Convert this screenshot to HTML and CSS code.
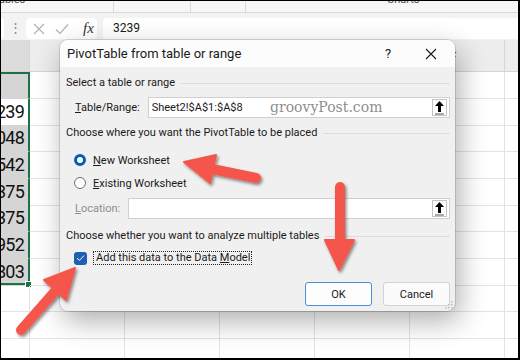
FILE: index.html
```html
<!DOCTYPE html>
<html lang="en">
<head>
<meta charset="UTF-8">
<meta name="viewport" content="width=device-width, initial-scale=1.0">
<title>PivotTable from table or range</title>
<link rel="stylesheet" href="styles.css">
</head>
<body>

<div class="screen">
  <div class="ribbon-labels">
    <span class="group-label tables">Tables</span>
    <span class="group-sep sep1"></span>
    <span class="group-sep sep2"></span>
    <span class="group-sep sep3"></span>
    <span class="group-label charts">Charts</span>
  </div>

  <div class="formula-row">
    <div class="name-box"></div>
    <div class="bar-grip">&#8942;</div>
    <div class="fx-box">
      <svg class="fx-icon" width="12" height="12" viewBox="0 0 12 12"><path d="M1 1L11 11M11 1L1 11" stroke="#b3b3b3" stroke-width="1.2" fill="none"/></svg>
      <svg class="fx-icon" width="14" height="12" viewBox="0 0 14 12"><path d="M1 6.5L5 10.5L13 1.5" stroke="#b3b3b3" stroke-width="1.2" fill="none"/></svg>
      <span class="fx-text">fx</span>
    </div>
    <div class="formula-input">3239</div>
  </div>

  <div class="sheet">
    <div class="sheet-head">
      <div class="col-head active"></div>
      <div class="col-head"></div>
      <div class="col-head"></div>
      <div class="col-head"></div>
      <div class="col-head"></div>
      <div class="col-head letter-f">F</div>
      <div class="col-head"></div>
    </div>
    <div class="sheet-row"><div class="cell sel sel-top"></div><div class="cell"></div><div class="cell"></div><div class="cell"></div><div class="cell"></div><div class="cell"></div><div class="cell"></div></div>
    <div class="sheet-row"><div class="cell sel current">3239</div><div class="cell"></div><div class="cell"></div><div class="cell"></div><div class="cell"></div><div class="cell"></div><div class="cell"></div></div>
    <div class="sheet-row"><div class="cell sel">6048</div><div class="cell"></div><div class="cell"></div><div class="cell"></div><div class="cell"></div><div class="cell"></div><div class="cell"></div></div>
    <div class="sheet-row"><div class="cell sel">1542</div><div class="cell"></div><div class="cell"></div><div class="cell"></div><div class="cell"></div><div class="cell"></div><div class="cell"></div></div>
    <div class="sheet-row"><div class="cell sel">2375</div><div class="cell"></div><div class="cell"></div><div class="cell"></div><div class="cell"></div><div class="cell"></div><div class="cell"></div></div>
    <div class="sheet-row"><div class="cell sel">4375</div><div class="cell"></div><div class="cell"></div><div class="cell"></div><div class="cell"></div><div class="cell"></div><div class="cell"></div></div>
    <div class="sheet-row"><div class="cell sel">5952</div><div class="cell"></div><div class="cell"></div><div class="cell"></div><div class="cell"></div><div class="cell"></div><div class="cell"></div></div>
    <div class="sheet-row"><div class="cell sel sel-bottom">7803</div><div class="cell"></div><div class="cell"></div><div class="cell"></div><div class="cell"></div><div class="cell"></div><div class="cell"></div></div>
    <div class="sheet-row"><div class="cell"></div><div class="cell"></div><div class="cell"></div><div class="cell"></div><div class="cell"></div><div class="cell"></div><div class="cell"></div></div>
    <div class="sheet-row"><div class="cell"></div><div class="cell"></div><div class="cell"></div><div class="cell"></div><div class="cell"></div><div class="cell"></div><div class="cell"></div></div>
    <div class="sheet-row"><div class="cell"></div><div class="cell"></div><div class="cell"></div><div class="cell"></div><div class="cell"></div><div class="cell"></div><div class="cell"></div></div>
  </div>
</div>

<div class="dialog">
  <div class="dialog-title">
    <span class="title-text">PivotTable from table or range</span>
    <span class="title-help">?</span>
    <span class="title-close">
      <svg width="12" height="12" viewBox="0 0 12 12"><path d="M1 1L11 11M11 1L1 11" stroke="#1a1a1a" stroke-width="1.1" fill="none"/></svg>
    </span>
  </div>

  <div class="dialog-body">
    <div class="section s1">Select a table or range</div>
    <div class="field-row r1">
      <span class="field-label"><u>T</u>able/Range:</span>
      <div class="ref-input">
        <span class="ref-value">Sheet2!$A$1:$A$8</span>
        <span class="ref-btn">
          <svg width="11" height="15" viewBox="0 0 11 15"><path d="M5.5 1L1 6H4V12H7V6H10Z" fill="#000"/><path d="M1 14H10" stroke="#555" stroke-width="1"/></svg>
        </span>
      </div>
    </div>

    <div class="section s2">Choose where you want the PivotTable to be placed</div>
    <div class="option o1"><span class="radio on"></span><span><u>N</u>ew Worksheet</span></div>
    <div class="option o2"><span class="radio"></span><span><u>E</u>xisting Worksheet</span></div>
    <div class="field-row r2 muted">
      <span class="field-label"><u>L</u>ocation:</span>
      <div class="ref-input">
        <span class="ref-value"></span>
        <span class="ref-btn">
          <svg width="11" height="15" viewBox="0 0 11 15"><path d="M5.5 1L1 6H4V12H7V6H10Z" fill="#000"/><path d="M1 14H10" stroke="#555" stroke-width="1"/></svg>
        </span>
      </div>
    </div>

    <div class="section s3">Choose whether you want to analyze multiple tables</div>
    <div class="option o3">
      <span class="checkbox">
        <svg width="9" height="8" viewBox="0 0 9 8"><path d="M1 4.2L3.4 6.4L8 1.6" stroke="#fff" stroke-width="1" fill="none"/></svg>
      </span>
      <span class="focus-label">Add this data to the Data <u>M</u>odel</span>
    </div>

    <div class="buttons">
      <button class="btn primary">OK</button>
      <button class="btn">Cancel</button>
    </div>
  </div>

  <span class="watermark">groovyPost.com</span>
  <svg class="resize-grip" width="8" height="8" viewBox="0 0 8 8" fill="#b5b5b5">
    <rect x="6" y="0" width="1.4" height="1.4"/><rect x="3" y="3" width="1.4" height="1.4"/><rect x="6" y="3" width="1.4" height="1.4"/>
    <rect x="0" y="6" width="1.4" height="1.4"/><rect x="3" y="6" width="1.4" height="1.4"/><rect x="6" y="6" width="1.4" height="1.4"/>
  </svg>
</div>

<!-- red callout arrows drawn over the screenshot -->
<svg class="arrows" width="520" height="360" viewBox="0 0 520 360">
  <defs>
    <filter id="arrowShadow" x="-20%" y="-20%" width="140%" height="140%">
      <feDropShadow dx="1.5" dy="2" stdDeviation="1.6" flood-color="#000" flood-opacity="0.45"/>
    </filter>
  </defs>
  <g fill="#f4574b" stroke="#f4574b" filter="url(#arrowShadow)">
    <line x1="256" y1="178" x2="212" y2="169" stroke-width="10" stroke-linecap="round"/>
    <polygon points="184,162 216,155 210,183" stroke-width="2" stroke-linejoin="round"/>

    <line x1="340" y1="187" x2="340" y2="244" stroke-width="10" stroke-linecap="round"/>
    <polygon points="339,270 325,240 354,240" stroke-width="2" stroke-linejoin="round"/>

    <line x1="21" y1="330" x2="57" y2="289" stroke-width="10" stroke-linecap="round"/>
    <polygon points="75,268 44,280 66,300" stroke-width="2" stroke-linejoin="round"/>
  </g>
</svg>

</body>
</html>
```

FILE: styles.css
```css
* {
  box-sizing: border-box;
}

body {
  margin: 0;
  width: 520px;
  height: 360px;
  overflow: hidden;
  position: relative;
  background-color: #000;
  font-family: Roboto, "Noto Sans", sans-serif;
  color: #1a1a1a;
}

.screen {
  margin: 1px 2px 0 1px;
  height: 357px;
  background-color: #fff;
  overflow: hidden;
}

/* ribbon group captions, cut off at the top */
.ribbon-labels {
  position: relative;
  height: 12px;
  background-color: #f7f7f7;
  border-bottom: 1px solid #d8d8d8;
  overflow: hidden;
}

.group-label {
  position: absolute;
  top: -8px;
  font-size: 11px;
  color: #555;
}

.tables { left: -8px; }
.charts { left: 386px; }

.group-sep {
  position: absolute;
  top: 0;
  width: 1px;
  height: 11px;
  background-color: #dadada;
}

.sep1 { left: 112px; }
.sep2 { left: 189px; }
.sep3 { left: 244px; }

/* formula bar */
.formula-row {
  display: flex;
  height: 27px;
  padding-top: 5px;
  background-color: #f3f3f3;
}

.name-box {
  width: 23px;
  height: 21px;
  margin-left: -20px;
  background-color: #fff;
  border-radius: 4px;
}

.bar-grip {
  width: 22px;
  text-align: center;
  font-size: 13px;
  line-height: 20px;
  color: #8a8a8a;
}

.fx-box {
  display: flex;
  align-items: center;
  width: 71px;
  height: 21px;
  padding-left: 7px;
  background-color: #fff;
  border-radius: 4px;
}

.fx-icon {
  margin-right: 10px;
}

.fx-text {
  margin-left: 4px;
  font-family: "Liberation Serif", serif;
  font-style: italic;
  font-size: 15px;
  color: #333;
}

.formula-input {
  flex: 1;
  height: 21px;
  margin-left: 6px;
  margin-right: -6px;
  padding-left: 10px;
  background-color: #fff;
  border-radius: 4px 0 0 0;
  font-size: 12px;
  line-height: 20px;
}

/* worksheet grid */
.sheet {
  margin-left: -61px;
}

.sheet-head,
.sheet-row {
  display: grid;
  grid-template-columns: 90px repeat(5, 95px) 70px;
}

.sheet-head {
  height: 32px;
  background-color: #ededed;
  border-bottom: 1px solid #d4d4d4;
}

.col-head {
  padding-top: 10px;
  text-align: center;
  font-size: 12px;
  color: #444;
  border-right: 1px solid #d6d6d6;
}

.col-head.active {
  background-color: #dcdcdc;
}

.col-head.letter-f {
  padding-right: 8px;
}

.sheet-row {
  height: 26.7px;
}

.cell {
  position: relative;
  border-right: 1px solid #e3e3e3;
  border-bottom: 1px solid #e3e3e3;
  padding-right: 4px;
  text-align: right;
  font-size: 18px;
  letter-spacing: -0.8px;
  line-height: 26px;
  color: #111;
}

.cell.sel {
  background-color: #d5d5d5;
  border-right: 2px solid #1e7145;
  border-bottom-color: #d5d5d5;
}

.cell.current {
  background-color: #fff;
}

.cell.sel-top {
  box-shadow: inset 0 2px 0 #1e7145;
}

.cell.sel-bottom {
  box-shadow: inset 0 -2px 0 #1e7145;
}

.cell.sel-bottom::after {
  content: "";
  position: absolute;
  right: -4px;
  bottom: -3px;
  width: 5px;
  height: 5px;
  background-color: #1e7145;
  border: 1px solid #fff;
}

/* dialog */
.dialog {
  position: absolute;
  left: 60px;
  top: 40px;
  width: 395px;
  height: 271px;
  background-color: #f0f0f0;
  border-radius: 8px;
  box-shadow: 0 0 0 1px rgba(0, 0, 0, 0.12), 4px 10px 28px rgba(0, 0, 0, 0.32);
  font-size: 11px;
}

.dialog-title {
  display: flex;
  align-items: center;
  height: 27px;
  padding-left: 7px;
  background-color: #fcfcfc;
  border-radius: 8px 8px 0 0;
}

.title-text {
  flex: 1;
  font-size: 13px;
}

.title-help {
  width: 20px;
  margin-right: 21px;
  text-align: center;
  font-size: 13px;
}

.title-close {
  display: flex;
  justify-content: center;
  width: 24px;
  margin-right: 12px;
}

.dialog-body {
  padding: 0 5px 0 6px;
}

.section {
  display: flex;
  align-items: center;
  gap: 6px;
  height: 14px;
  line-height: 14px;
}

.section::after {
  content: "";
  flex: 1;
  height: 1px;
  background-color: #dcdcdc;
}

.s1 { margin-top: 9px; }
.s2 { margin-top: 8px; }
.s3 { margin-top: 10px; }

.field-row {
  display: flex;
  align-items: center;
  gap: 8px;
  padding-left: 9px;
}

.r1 { margin-top: 7px; }
.r2 { margin-top: 6px; }

.field-row.muted .field-label {
  color: #8d8d8d;
}

.ref-input {
  flex: 1;
  display: flex;
  align-items: center;
  height: 21px;
  padding: 0 2px 0 3px;
  background-color: #fff;
  border: 1px solid #d0d0d0;
}

.ref-value {
  flex: 1;
}

.ref-btn {
  display: flex;
  justify-content: center;
  align-items: center;
  width: 15px;
  height: 17px;
  border: 1px solid #c4c4c4;
  background-color: #fff;
}

.option {
  display: flex;
  align-items: center;
  gap: 7px;
  height: 18px;
  padding-left: 8px;
}

.o1 { margin-top: 11px; }
.o2 { margin-top: 5px; }
.o3 {
  margin-top: 6px;
  gap: 6px;
}

.radio {
  width: 12px;
  height: 12px;
  border-radius: 50%;
  border: 1px solid #6f6f6f;
  background-color: #fff;
}

.radio.on {
  border: 3.5px solid #005fb8;
}

.checkbox {
  display: flex;
  justify-content: center;
  align-items: center;
  width: 13px;
  height: 13px;
  border-radius: 3px;
  background-color: #1e5fb5;
}

.focus-label {
  padding: 0 1px 0 2px;
  border: 1px dotted #222;
  line-height: 12px;
}

.buttons {
  display: flex;
  justify-content: flex-end;
  gap: 11px;
  margin-top: 15px;
}

.btn {
  width: 67px;
  height: 24px;
  border: 1px solid #d2d2d2;
  border-radius: 3px;
  background-color: #fbfbfb;
  font-family: inherit;
  font-size: 11px;
  color: #1a1a1a;
}

.btn.primary {
  border-color: #4c8fd6;
  background-color: #fdfdfd;
}

.watermark {
  position: absolute;
  left: 210px;
  top: 59px;
  font-family: "DejaVu Serif", serif;
  font-size: 14px;
  color: rgba(110, 110, 110, 0.8);
}

.resize-grip {
  position: absolute;
  right: 2px;
  bottom: 2px;
}

.arrows {
  position: absolute;
  left: 0;
  top: 0;
  pointer-events: none;
}
```
